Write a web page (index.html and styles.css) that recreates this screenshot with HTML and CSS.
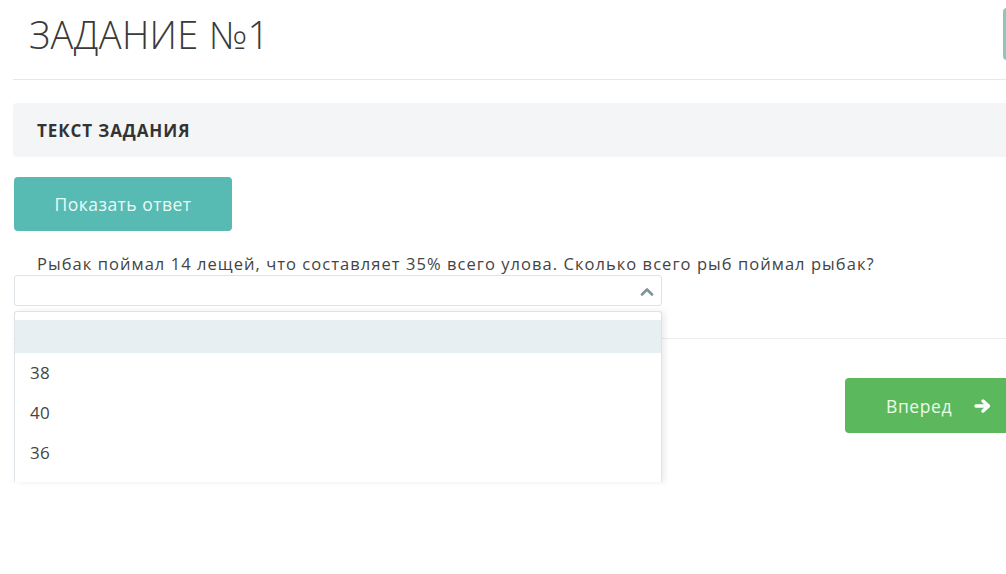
FILE: index.html
```html
<!DOCTYPE html>
<html lang="ru">
<head>
<meta charset="utf-8">
<link rel="stylesheet" href="styles.css">
</head>
<body>
<div class="page">
  <header class="head">
    <h1 class="title">ЗАДАНИЕ №1</h1>
    <span class="head-btn"></span>
  </header>
  <div class="panel"><span class="panel-title">ТЕКСТ ЗАДАНИЯ</span></div>
  <button class="btn-show">Показать ответ</button>
  <p class="question">Рыбак поймал 14 лещей, что составляет 35% всего улова. Сколько всего рыб поймал рыбак?</p>
  <div class="select-wrap">
    <div class="select">
      <svg class="chev" width="14" height="9" viewBox="0 0 14 9"><path d="M2 7.5 L7 2.5 L12 7.5" fill="none" stroke="#7f9499" stroke-width="2.6" stroke-linecap="round" stroke-linejoin="round"/></svg>
    </div>
    <ul class="menu">
      <li class="opt opt-active"></li>
      <li class="opt">38</li>
      <li class="opt">40</li>
      <li class="opt">36</li>
    </ul>
  </div>
  <div class="footer">
    <button class="btn-next">Вперед
      <svg class="arrow" width="18" height="16" viewBox="0 0 18 16"><path d="M2 8 H14 M9 3 L14.5 8 L9 13" fill="none" stroke="#fff" stroke-width="3.4" stroke-linecap="round" stroke-linejoin="round"/></svg>
    </button>
  </div>
</div>
</body>
</html>
```
FILE: styles.css
```css
html, body {
  margin: 0;
  padding: 0;
  background: #fff;
  overflow: hidden;
  width: 1006px;
  height: 574px;
}
body {
  font-family: "Open Sans", "Liberation Sans", sans-serif;
  color: #444;
}
.page {
  width: 1010px;
  margin-left: 13px;
}
.head {
  border-bottom: 1px solid #e8e8e8;
  display: flex;
  justify-content: space-between;
  align-items: flex-start;
  box-sizing: border-box;
  height: 80px;
}
.title {
  margin: 8px 0 0 16px;
  font-size: 38px;
  font-weight: 300;
  color: #3a3a3a;
  letter-spacing: 0.3px;
  line-height: 52px;
}
.head-btn {
  margin-top: 8px;
  width: 20px;
  height: 52px;
  border: 3px solid #6fb8b0;
  border-right: none;
  border-radius: 4px 0 0 4px;
  box-sizing: border-box;
  opacity: 0.8;
}
.panel {
  margin-top: 23px;
  height: 54px;
  background: #f4f5f6;
  border-radius: 4px;
  display: flex;
  align-items: center;
  padding-left: 24px;
}
.panel-title {
  font-weight: 700;
  font-size: 17px;
  letter-spacing: 0.9px;
  color: #333;
}
.btn-show {
  margin-top: 20px;
  margin-left: 1px;
  width: 218px;
  height: 54px;
  border: none;
  border-radius: 4px;
  background: #58bbb3;
  color: #e9faf7;
  font-family: "Open Sans", "Liberation Sans", sans-serif;
  font-size: 17.5px;
  letter-spacing: 0.5px;
  display: block;
}
.question {
  margin: 21px 0 0 24px;
  font-size: 16.5px;
  letter-spacing: 1.05px;
  line-height: 23px;
  color: #444;
}
.select-wrap {
  position: relative;
  width: 648px;
  margin-left: 1px;
}
.select {
  height: 31px;
  border: 1px solid #dde3e6;
  border-radius: 3px;
  box-sizing: border-box;
  display: flex;
  justify-content: flex-end;
  align-items: center;
  padding-right: 7px;
}
.chev {
  margin-top: 1px;
}
.menu {
  position: absolute;
  left: 0;
  top: 36px;
  width: 648px;
  height: 171px;
  margin: 0;
  padding: 8px 0 0;
  list-style: none;
  background: #fff;
  border: 1px solid #dde3e6;
  border-bottom: none;
  border-radius: 3px 3px 0 0;
  box-sizing: border-box;
  overflow: hidden;
  box-shadow: 3px 0 6px rgba(0, 0, 0, 0.08);
  z-index: 2;
}
.opt {
  height: 40px;
  line-height: 40px;
  padding-left: 15px;
  font-size: 17px;
  letter-spacing: 0.4px;
  color: #444;
}
.opt-active {
  height: 33px;
  background: #e8eff3;
}
.footer {
  margin-top: 32px;
  border-top: 1px solid #ececec;
  display: flex;
  justify-content: flex-end;
  padding-top: 39px;
}
.btn-next {
  width: 178px;
  height: 55px;
  border: none;
  border-radius: 4px;
  background: #5cb85c;
  color: #eafbe9;
  font-family: "Open Sans", "Liberation Sans", sans-serif;
  font-size: 17.5px;
  letter-spacing: 0.6px;
  display: flex;
  align-items: center;
  padding-left: 41px;
  gap: 22px;
  box-sizing: border-box;
}
.arrow {
  margin-top: 1px;
}
```
